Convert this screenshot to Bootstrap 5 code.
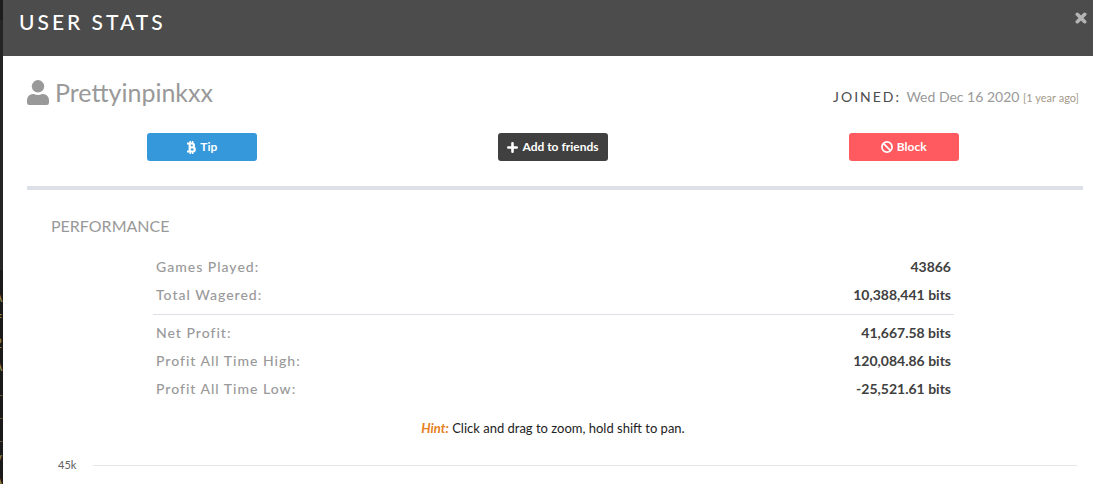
<!DOCTYPE html>
<html lang="en">
<head>
<meta charset="utf-8">
<meta name="viewport" content="width=device-width, initial-scale=1">
<title>User Stats</title>
<link href="https://cdn.jsdelivr.net/npm/bootstrap@5.3.0/dist/css/bootstrap.min.css" rel="stylesheet">
<style>
body { font-family: Lato, "Liberation Sans", sans-serif; background: #1e1e1e; color: #222; overflow: hidden; }
.backdrop-log { width: 3px; padding-top: 287px; overflow: hidden; font: 14px/23px "Liberation Mono", monospace; color: #8f8648; background: linear-gradient(#1c1c1c 0 20px, #242424 20px 270px, #1a1a1a 270px); }
.backdrop-log span { display: block; margin-left: -6px; }
.stats-panel { min-width: 0; min-height: 100vh; background: #fff; }
.stats-header { background: #4c4c4c; height: 56px; padding: 6px 6px 0 16px; }
.stats-title { font-size: 21px; line-height: 32px; letter-spacing: 3px; font-weight: 500; color: #fff; }
.close-btn { width: 12px; height: 12px; margin-top: 6px; color: #b4b4b4; line-height: 0; }
.stats-body { padding: 19px 10px 0 24px; }
.inner-row { padding-right: 4px; }
.user-name { gap: 6px; font-size: 25px; line-height: 34px; color: #999; }
.joined { padding-top: 10px; font-size: 14px; line-height: 20px; color: #999; }
.joined-label { letter-spacing: 2px; margin-right: 2px; color: #4c4c4c; }
.joined-ago { font-size: 11px; color: #a39a8a; }
.action-btn { width: 110px; height: 28px; border-radius: 3px; color: #fff; font-size: 12px; line-height: 28px; font-weight: 700; }
.action-btn:hover { color: #fff; }
.btn-tip, .btn-tip:hover { background: #3498db; }
.btn-add, .btn-add:hover { background: #404040; }
.btn-block-user, .btn-block-user:hover { background: #ff5a5f; }
.divider { height: 4px; background: #dde0e6; border: 0; opacity: 1; margin: 25px 0 0; }
.section-title { font-size: 16px; line-height: 20px; color: #999; margin: 26px 0 0 24px; }
.stats-wrap { padding: 17px 129px 0 126px; }
.stats-table { width: 100%; }
.stats-table th, .stats-table td { height: 28px; padding: 0 3px; line-height: 20px; }
.stats-table th { font-size: 14px; font-weight: 500; letter-spacing: 1px; color: #999; }
.stats-table td { font-size: 14px; font-weight: 700; text-align: right; color: #404040; }
.stats-table tbody + tbody { border-top: 1px solid #dde0e6; }
.stats-table .group-end > * { height: 33px; padding-bottom: 5px; }
.stats-table .group-start > * { height: 33px; padding-top: 5px; }
.hint { font-size: 13px; line-height: 20px; margin: 15px 0 0; padding-right: 4px; }
.hint em { color: #e67e22; font-weight: 700; }
.chart-axis { margin-top: 17px; padding: 0 6px 0 31px; gap: 16px; font-size: 11px; line-height: 20px; color: #606060; }
.axis-label { width: 19px; }
.grid-line { height: 1px; background: #e6e6e6; }
</style>
</head>
<body>
<div class="d-flex">
  <div class="backdrop-log flex-shrink-0 vh-100" aria-hidden="true"><span>A</span><span>f</span><span>2</span><span>A</span><span>_</span><span>_</span><span>_</span><span>y</span><span>A</span></div>
  <main class="stats-panel flex-grow-1">
    <header class="stats-header d-flex justify-content-between align-items-start">
      <h1 class="stats-title m-0">USER STATS</h1>
      <button type="button" class="close-btn btn p-0 border-0" aria-label="Close">
        <svg width="12" height="12" viewBox="0 0 12 12" stroke="currentColor" stroke-width="3.6" stroke-linecap="round"><path d="M2.3 2.3 9.7 9.7M9.7 2.3 2.3 9.7"/></svg>
      </button>
    </header>
    <div class="stats-body">
      <div class="inner-row d-flex justify-content-between align-items-center">
        <h2 class="user-name d-flex align-items-center m-0 fw-normal">
          <svg width="22" height="25" viewBox="0 0 22 25" fill="#999"><circle cx="11" cy="6.3" r="6.2"/><path d="M6 14h1c2.500 1.200 5.500 1.200 8 0h1a6 6 0 0 1 6 6v2.700A2.300 2.300 0 0 1 19.700 25H2.300A2.300 2.300 0 0 1 0 22.700V20a6 6 0 0 1 6-6z"/></svg>
          <span>Prettyinpinkxx</span>
        </h2>
        <div class="joined"><span class="joined-label">JOINED:</span> Wed Dec 16 2020 <span class="joined-ago">[1 year ago]</span></div>
      </div>
      <div class="inner-row">
        <div class="row g-0 text-center pt-4">
          <div class="col-4 d-flex justify-content-center">
            <button type="button" class="action-btn btn-tip btn border-0 p-0 d-flex justify-content-center align-items-center gap-1"><svg width="9" height="13" viewBox="0 0 9 13" fill="none" stroke="currentColor" stroke-width="2.200"><path d="M0 2.500h5a1.900 1.900 0 0 1 0 3.900H2.500M5 6.400h.7a2 2 0 0 1 0 4.100H0M2.700 2.500v8"/><path stroke-width="1.500" d="M3.200 0v2M5.600 0v2M3.200 11v2M5.600 11v2"/></svg>Tip</button>
          </div>
          <div class="col-4 d-flex justify-content-center">
            <button type="button" class="action-btn btn-add btn border-0 p-0 d-flex justify-content-center align-items-center gap-1"><svg width="11" height="11" viewBox="0 0 11 11" stroke="currentColor" stroke-width="2.600" stroke-linecap="round"><path d="M5.500 1.300v8.400M1.300 5.500h8.400"/></svg>Add to friends</button>
          </div>
          <div class="col-4 d-flex justify-content-center">
            <button type="button" class="action-btn btn-block-user btn border-0 p-0 d-flex justify-content-center align-items-center gap-1"><svg width="12" height="12" viewBox="0 0 12 12" fill="none" stroke="currentColor" stroke-width="1.700"><circle cx="6" cy="6" r="5.100"/><path d="m2.400 2.400 7.200 7.200"/></svg>Block</button>
          </div>
        </div>
      </div>
      <hr class="divider">
      <h3 class="section-title fw-normal">PERFORMANCE</h3>
      <div class="stats-wrap">
        <table class="stats-table">
          <tbody>
            <tr><th scope="row">Games Played:</th><td>43866</td></tr>
            <tr class="group-end"><th scope="row">Total Wagered:</th><td>10,388,441 bits</td></tr>
          </tbody>
          <tbody>
            <tr class="group-start"><th scope="row">Net Profit:</th><td>41,667.58 bits</td></tr>
            <tr><th scope="row">Profit All Time High:</th><td>120,084.86 bits</td></tr>
            <tr><th scope="row">Profit All Time Low:</th><td>-25,521.61 bits</td></tr>
          </tbody>
        </table>
      </div>
      <p class="hint text-center"><em>Hint:</em> Click and drag to zoom, hold shift to pan.</p>
      <div class="chart-axis d-flex align-items-center"><span class="axis-label">45k</span><div class="grid-line flex-grow-1"></div></div>
    </div>
  </main>
</div>
<script src="https://cdn.jsdelivr.net/npm/bootstrap@5.3.0/dist/js/bootstrap.bundle.min.js"></script>
</body>
</html>
